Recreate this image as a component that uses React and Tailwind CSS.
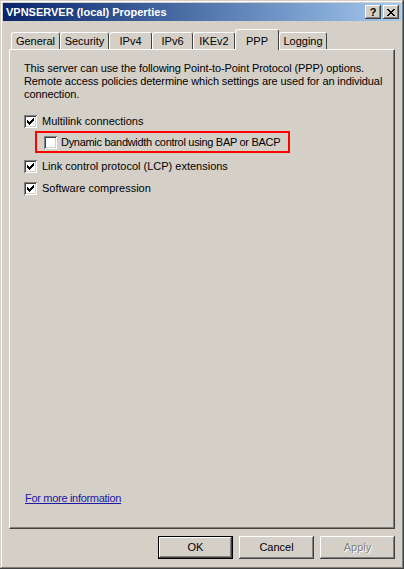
import React from 'react';

const raised =
  'shadow-[inset_-1px_-1px_#404040,inset_1px_1px_#ffffff,inset_-2px_-2px_#808080,inset_2px_2px_#d4d0c8]';

function Check({ checked }) {
  return (
    <span className="w-[13px] h-[13px] shrink-0 bg-white flex items-center justify-center shadow-[inset_1px_1px_#808080,inset_-1px_-1px_#ffffff,inset_2px_2px_#404040,inset_-2px_-2px_#d4d0c8]">
      {checked && (
        <svg width="7" height="7" viewBox="0 0 7 7" shapeRendering="crispEdges">
          <path d="M6 0h1v1h-1zM5 1h1v1h-1zM4 2h1v1h-1zM3 3h1v1h-1zM2 4h1v1h-1zM1 3h1v1h-1zM0 2h1v1h-1z M6 1h1v1h-1zM5 2h1v1h-1zM4 3h1v1h-1zM3 4h1v1h-1zM2 5h1v1h-1zM1 4h1v1h-1zM0 3h1v1h-1z M6 2h1v1h-1zM5 3h1v1h-1zM4 4h1v1h-1zM3 5h1v1h-1zM2 6h1v1h-1zM1 5h1v1h-1zM0 4h1v1h-1z" fill="#000" />
        </svg>
      )}
    </span>
  );
}

const tabs = [
  ['General', 49],
  ['Security', 49],
  ['IPv4', 43],
  ['IPv6', 41],
  ['IKEv2', 42],
  ['PPP', 44],
  ['Logging', 48],
];

export default function App() {
  return (
    <div
      className="w-[404px] h-[569px] bg-[#d4d0c8] p-[3px] flex flex-col text-[11px] text-black shadow-[inset_-1px_-1px_#404040,inset_1px_1px_#d4d0c8,inset_-2px_-2px_#808080,inset_2px_2px_#ffffff]"
      style={{ fontFamily: '"Liberation Sans", Arial, sans-serif' }}
    >
      {/* title bar */}
      <div className="h-[18px] flex items-center justify-between bg-gradient-to-r from-[#0a246a] to-[#a6caf0] pl-[3px] pr-[2px]">
        <span className="text-white font-bold text-[11px] leading-none">VPNSERVER (local) Properties</span>
        <div className="flex gap-[2px]">
          <div className={`w-[16px] h-[14px] bg-[#d4d0c8] flex items-center justify-center font-bold text-[11px] leading-none ${raised}`}>?</div>
          <div className={`w-[16px] h-[14px] bg-[#d4d0c8] flex items-center justify-center ${raised}`}>
            <svg width="8" height="7" viewBox="0 0 8 7" shapeRendering="crispEdges">
              <path d="M0 0h2v1h-2zM6 0h2v1h-2zM1 1h2v1h-2zM5 1h2v1h-2zM2 2h4v1h-4zM3 3h2v1h-2zM2 4h4v1h-4zM1 5h2v1h-2zM5 5h2v1h-2zM0 6h2v1h-2zM6 6h2v1h-2z" fill="#000" />
            </svg>
          </div>
        </div>
      </div>

      {/* tabs */}
      <div className="mt-[8px] h-[20px] flex items-end pl-[8px]">
        {tabs.map(([name, w]) =>
          name === 'PPP' ? (
            <div
              key={name}
              style={{ width: w }}
              className="relative z-10 -mb-px h-[21px] bg-[#d4d0c8] border-l border-t border-white border-r border-r-[#404040] rounded-t-[3px] flex items-start justify-center pt-[3px] text-[11px]"
            >
              {name}
            </div>
          ) : (
            <div
              key={name}
              style={{ width: w }}
              className="h-[17px] bg-[#d4d0c8] border-l border-t border-white border-r border-r-[#404040] rounded-t-[3px] flex items-center justify-center text-[11px] pt-px"
            >
              {name}
            </div>
          )
        )}
      </div>

      {/* panel */}
      <div className="ml-[6px] mr-[6px] h-[480px] border-l border-t border-white border-r border-b border-r-[#404040] border-b-[#404040] shadow-[inset_-1px_-1px_#808080] flex flex-col pl-[14px] pt-[12px] pb-[23px]">
        <p className="leading-[13px] text-[11px] tracking-[-0.1px]">
          This server can use the following Point-to-Point Protocol (PPP) options.
          <br />
          Remote access policies determine which settings are used for an individual
          <br />
          connection.
        </p>
        <div className="mt-[14px] flex items-center gap-[5px] h-[13px]">
          <Check checked />
          <span>Multilink connections</span>
        </div>
        <div className="mt-[3px] ml-[11px] w-[255px] h-[22px] border-2 border-[#ff0000] flex items-center gap-[4px] pl-[7px] whitespace-nowrap">
          <Check />
          <span className="tracking-[-0.3px]">Dynamic bandwidth control using BAP or BACP</span>
        </div>
        <div className="mt-[7px] flex items-center gap-[5px] h-[13px]">
          <Check checked />
          <span>Link control protocol (LCP) extensions</span>
        </div>
        <div className="mt-[9px] flex items-center gap-[5px] h-[13px]">
          <Check checked />
          <span>Software compression</span>
        </div>
        <a className="mt-auto ml-px w-fit text-[#1a1aa6] underline leading-[13px] tracking-[-0.3px]">For more information</a>
      </div>

      {/* buttons */}
      <div className="mt-[7px] flex justify-end gap-[6px] pr-[6px]">
        <div className="w-[75px] h-[23px] border border-black bg-[#d4d0c8] flex items-center justify-center shadow-[inset_-1px_-1px_#404040,inset_1px_1px_#ffffff,inset_-2px_-2px_#808080]">
          OK
        </div>
        <div className={`w-[75px] h-[23px] bg-[#d4d0c8] flex items-center justify-center ${raised}`}>Cancel</div>
        <div className={`w-[75px] h-[23px] bg-[#d4d0c8] flex items-center justify-center text-[#808080] [text-shadow:1px_1px_0_#ffffff] ${raised}`}>
          Apply
        </div>
      </div>
    </div>
  );
}
